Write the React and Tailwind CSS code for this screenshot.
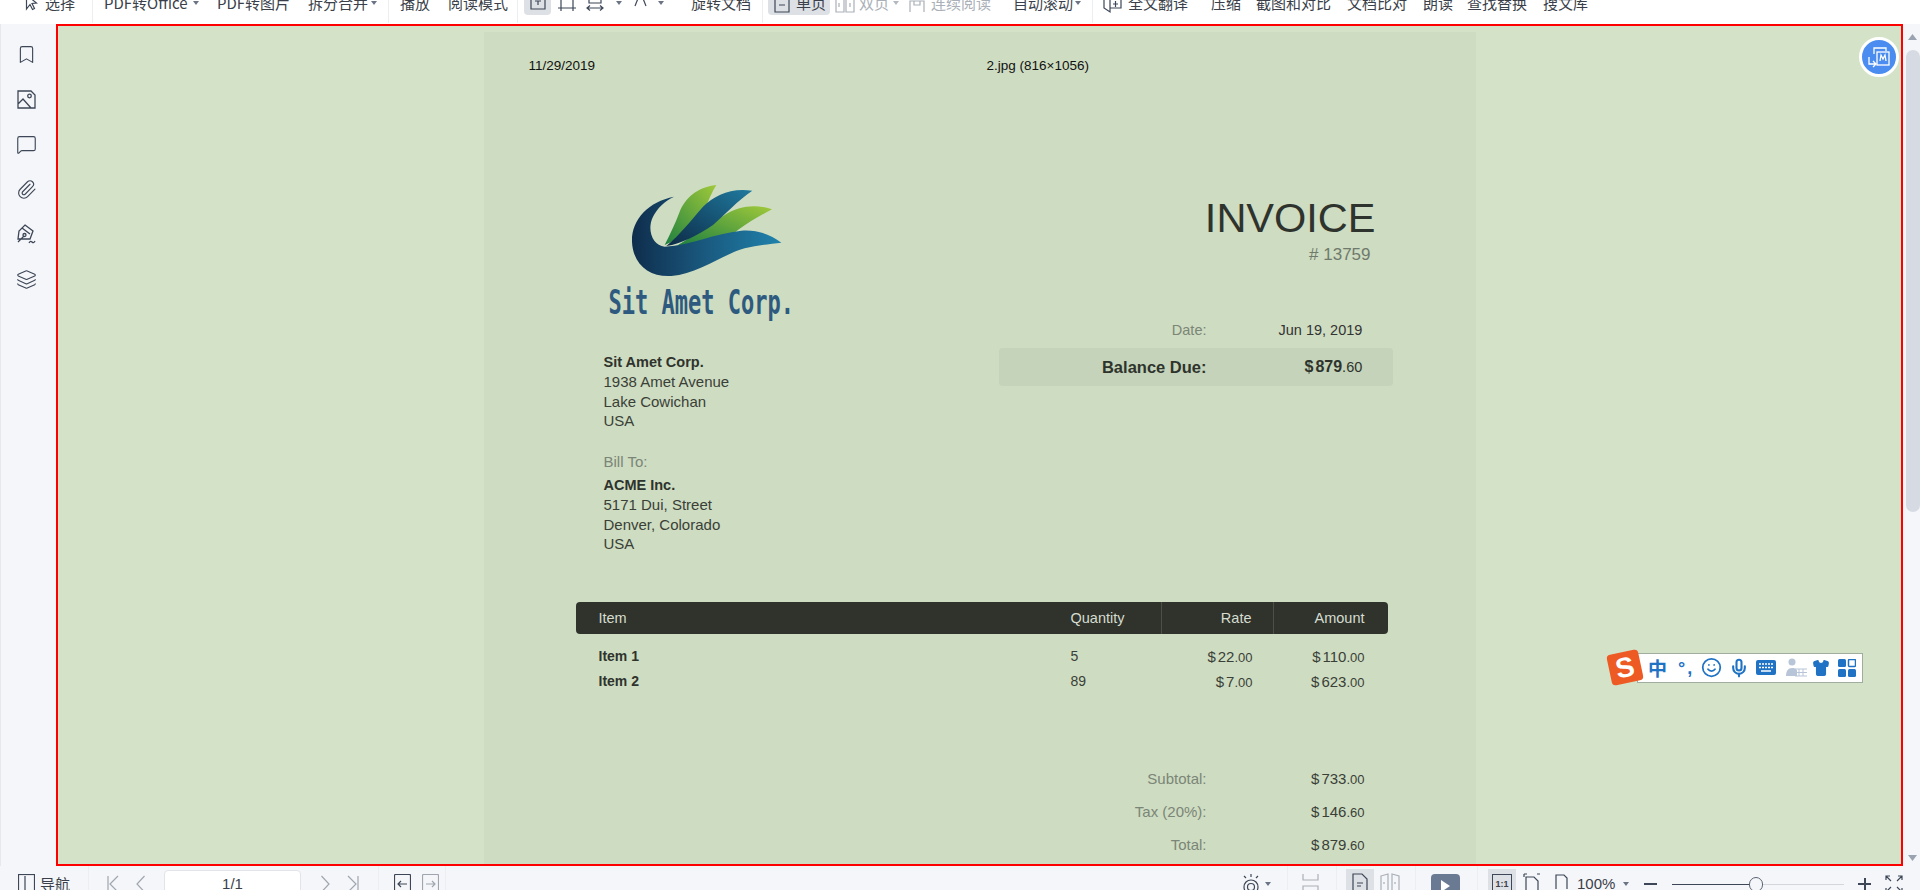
import React from 'react';
import { Bookmark, MessageSquare, Paperclip, Layers, Smile, Mic, Shirt } from 'lucide-react';

const cjk = "font-['Noto_Sans_CJK_SC','Noto_Sans',sans-serif]";

const Caret = ({ className = '' }) => (
  <svg width="6" height="4" viewBox="0 0 6 4" className={`shrink-0 ${className}`}>
    <path d="M0 0h6L3 4z" fill="#6b7485" />
  </svg>
);

const Divider = ({ className = '' }) => <div className={`w-px h-[40px] bg-[#eceef1] shrink-0 ${className}`} />;

const Label = ({ className = '', children }) => (
  <span className={`shrink-0 whitespace-nowrap text-[15px] leading-5 ${className}`}>{children}</span>
);

const Ico = ({ w = 18, h = 18, vb = '0 0 18 18', className = '', children, stroke = '#3d4757' }) => (
  <svg width={w} height={h} viewBox={vb} fill="none" stroke={stroke} strokeWidth="1.2" className={`shrink-0 ${className}`}>
    {children}
  </svg>
);

// toolbar icons: 30px tall, so the y values below are the y on the screen
const BarIco = ({ w = 18, className = '', children, stroke = '#3d4757' }) => (
  <Ico w={w} h={30} vb={`0 -12 ${w} 30`} className={className} stroke={stroke}>{children}</Ico>
);

const TopBar = () => (
  <div className="h-6 bg-white overflow-hidden shrink-0">
    <div className={`flex items-center h-[30px] -mt-3 pl-[25px] text-[#3a3f4a] ${cjk}`}>
      <BarIco w={13}><path d="M1.500 -5l10 8-4.500.5 2.500 5-2 1-2.500-5L1.500 9z" /></BarIco>
      <Label className="ml-[7px] w-[30px]">选择</Label>
      <Divider className="ml-[17px]" />
      <Label className="ml-[11px] w-[86px]">PDF转Office</Label>
      <Caret className="ml-[3px]" />
      <Label className="ml-[18px] w-[72px]">PDF转图片</Label>
      <Label className="ml-[19px] w-[60px]">拆分合并</Label>
      <Caret className="ml-[3px]" />
      <Divider className="ml-[11px]" />
      <Label className="ml-[11px] w-[30px]">播放</Label>
      <Label className="ml-[18px] w-[60px]">阅读模式</Label>
      <Divider className="ml-[9px]" />
      <div className="ml-[6px] w-[27px] h-[24px] bg-[#dde0e5] rounded-sm flex items-center justify-center shrink-0">
        <BarIco w={16}><path d="M1 -5V9H15V-5M5 1H11M8 1V5" /></BarIco>
      </div>
      <BarIco className="ml-[7px]"><path d="M3 -5V8H15V-5M0 8H3M15 8H18M3 8V11M15 8V11" /></BarIco>
      <BarIco className="ml-[10px]"><path d="M3 -5V3H15V-5M1 8H17M4 5.500L1 8L4 10.500M14 5.500L17 8L14 10.500" /></BarIco>
      <Caret className="ml-[12px]" />
      <BarIco w={13} className="ml-[12px]"><path d="M5 -4L1 6M8 -4L12 6" /></BarIco>
      <Caret className="ml-[11px]" />
      <Label className="ml-[27px] w-[60px]">旋转文档</Label>
      <Divider className="ml-[11px]" />
      <div className="ml-[5px] w-[62px] h-[24px] bg-[#dde0e5] rounded-sm flex items-center pl-[6px] shrink-0">
        <BarIco w={16}><path d="M1 -5V12H15V-5M5 5H11" /></BarIco>
        <Label className="ml-[6px]">单页</Label>
      </div>
      <BarIco w={20} stroke="#aab0b8" className="ml-[5px]"><path d="M1 -5V12H9V-5M11 -5V12H19V-5M4 3V7M15 3V7" /></BarIco>
      <Label className="ml-1 w-[30px] text-[#aab0b8]">双页</Label>
      <Caret className="ml-1 opacity-50" />
      <BarIco w={16} stroke="#aab0b8" className="ml-[10px]"><path d="M1 12V1H15V12M5 1V5H11V1" /></BarIco>
      <Label className="ml-[6px] w-[60px] text-[#aab0b8]">连续阅读</Label>
      <Label className="ml-[22px] w-[60px]">自动滚动</Label>
      <Caret className="ml-[2px]" />
      <Divider className="ml-[11px]" />
      <BarIco w={19} className="ml-[10px]"><path d="M1 -5V8L7 12V-2M7 8H18V-5M10 4H15M12.500 1V7" /></BarIco>
      <Label className="ml-[6px] w-[60px]">全文翻译</Label>
      <Label className="ml-[23px] w-[30px]">压缩</Label>
      <Label className="ml-[15px] w-[75px]">截图和对比</Label>
      <Label className="ml-4 w-[60px]">文档比对</Label>
      <Label className="ml-4 w-[30px]">朗读</Label>
      <Label className="ml-[14px] w-[60px]">查找替换</Label>
      <Label className="ml-4 w-[45px]">搜文库</Label>
    </div>
  </div>
);

const SideBar = () => (
  <div className="w-14 shrink-0 bg-[#f5f6f9] border-l border-[#e6e8ec] flex flex-col items-center pt-[20px] gap-[24px] pr-1 text-[#3d4757]">
    <Bookmark size={21} strokeWidth={1.3} />
    <svg width="21" height="21" viewBox="0 0 21 21" fill="none" stroke="currentColor" strokeWidth="1.3">
      <path d="M2 2h13l4 4v13H2zM2 15l5-5 8 9" />
      <circle cx="13.500" cy="7" r="1.800" />
    </svg>
    <MessageSquare size={21} strokeWidth={1.3} />
    <Paperclip size={21} strokeWidth={1.3} />
    <svg width="21" height="21" viewBox="0 0 21 21" fill="none" stroke="currentColor" strokeWidth="1.3">
      <path d="M9 1l8 6-3 8H2l1-8zM2 18l6-6" />
      <path d="M6 4l8 6" />
      <circle cx="8.500" cy="11" r="1.500" />
      <path d="M13 19c1-2 2-2 3-1s2 1 3-1" />
    </svg>
    <Layers size={21} strokeWidth={1.3} />
  </div>
);

const Logo = () => (
  <svg width="157" height="100" viewBox="140 30 471 300" className="block ml-6">
    <defs>
      <linearGradient id="swoosh" x1="0" x2="1" y1="0" y2="0">
        <stop offset="0" stopColor="#0f2d4c" />
        <stop offset="0.5" stopColor="#1a5a80" />
        <stop offset="1" stopColor="#1f82ab" />
      </linearGradient>
      <linearGradient id="blade" x1="0" x2="1" y1="1" y2="0">
        <stop offset="0" stopColor="#0d2a46" />
        <stop offset="1" stopColor="#1f7a9e" />
      </linearGradient>
      <linearGradient id="leaf" x1="0" x2="1" y1="1" y2="0">
        <stop offset="0" stopColor="#1f8040" />
        <stop offset="1" stopColor="#a0c93a" />
      </linearGradient>
    </defs>
    <path d="M405 45C345 52 312 85 295 125C282 160 265 195 250 225C300 205 340 170 370 120C380 95 392 65 405 45Z" fill="url(#leaf)" />
    <path d="M572 118C520 100 470 110 430 135C390 160 340 195 290 225L420 225C450 190 510 150 572 118Z" fill="url(#leaf)" />
    <path d="M513 62C450 52 400 75 365 110C330 150 295 195 255 228C300 222 350 195 395 165C430 135 470 90 513 62Z" fill="url(#blade)" />
    <path d="M278 80C200 95 150 150 152 215C155 285 205 322 270 318C350 312 420 255 490 235C530 225 570 222 600 218C570 195 530 178 480 182C400 190 330 225 250 230C215 228 195 180 215 140C228 115 250 92 278 80Z" fill="url(#swoosh)" />
  </svg>
);

const Money = ({ whole, cents }) => (
  <span className="text-[15px]">
    $<span className="ml-[2px]">{whole}</span>
    <span className="text-[13px]">.{cents}</span>
  </span>
);

const rows = [
  ['Item 1', '5', '22', '110'],
  ['Item 2', '89', '7', '623'],
];

const totals = [
  ['Subtotal:', '733', '00'],
  ['Tax (20%):', '146', '60'],
  ['Total:', '879', '60'],
];

const InvoicePage = () => (
  <div className="w-[992px] mx-auto mt-[6px] bg-[#cedcc1] h-[900px] pt-[26px] font-['Liberation_Sans',Arial,sans-serif] text-[14px] text-[#3a3f38]">
    <div className="flex pl-[45px] text-[13.500px] leading-4 text-[#111]">
      <span className="w-[458px]">11/29/2019</span>
      <span>2.jpg (816×1056)</span>
    </div>

    <div className="flex mt-[106px]">
      <div className="ml-[120px] w-[395px] shrink-0 text-[15px]">
        <Logo />
        <div className="ml-[5px] mt-[6px] h-[34px] font-['DejaVu_Sans_Mono',monospace] font-bold text-[22px] leading-[34px] text-[#2d5a7e] scale-y-150 origin-center whitespace-nowrap">
          Sit Amet Corp.
        </div>
        <div className="mt-[33px] leading-[19.300px]">
          <div className="font-bold text-[14.500px] text-[#2f332d]">Sit Amet Corp.</div>
          <div>1938 Amet Avenue</div>
          <div>Lake Cowichan</div>
          <div>USA</div>
        </div>
        <div className="mt-[22px] leading-[19px] text-[#7b8578]">Bill To:</div>
        <div className="mt-[5px] leading-[19.300px]">
          <div className="font-bold text-[14.500px] text-[#2f332d]">ACME Inc.</div>
          <div>5171 Dui, Street</div>
          <div>Denver, Colorado</div>
          <div>USA</div>
        </div>
      </div>

      <div className="w-[394px] pt-[14px]">
        <div className="pr-[17px] text-right text-[41.500px] leading-[48px] text-[#2f332d]">INVOICE</div>
        <div className="mt-[3px] pr-[22px] text-right text-[17px] leading-5 text-[#6f7a6c]">#&nbsp;13759</div>
        <div className="flex mt-[55px] leading-5 text-[14.500px]">
          <span className="w-[208px] text-right text-[#7b8578]">Date:</span>
          <span className="ml-[72px] text-[#333]">Jun 19, 2019</span>
        </div>
        <div className="flex items-center h-[38px] mt-2 bg-[#c4d3b9] rounded">
          <span className="w-[208px] text-right font-bold text-[16.500px] text-[#2f332d]">Balance Due:</span>
          <span className="ml-[98px] text-[#2f332d] text-[16px] font-bold">
            $<span className="ml-[2px]">879</span>
            <span className="font-normal text-[14.500px]">.60</span>
          </span>
        </div>
      </div>
    </div>

    <div className="ml-[92px] w-[812px] mt-[49px]">
      <div className="flex h-8 leading-8 bg-[#2f332b] rounded text-[#d6dcd0] text-[14.500px]">
        <div className="w-[495px] pl-[23px]">Item</div>
        <div className="w-[91px] border-r border-[#4c5147]">Quantity</div>
        <div className="w-[112px] pr-[21px] text-right border-r border-[#4c5147]">Rate</div>
        <div className="flex-1 pr-[23px] text-right">Amount</div>
      </div>
      <div className="mt-[10px]">
        {rows.map(([name, qty, rate, amount]) => (
          <div key={name} className="flex h-[25px] leading-[25px]">
            <div className="w-[495px] pl-[23px] font-bold text-[#2f332d]">{name}</div>
            <div className="w-[91px]">{qty}</div>
            <div className="w-[112px] pr-[21px] text-right"><Money whole={rate} cents="00" /></div>
            <div className="flex-1 pr-[23px] text-right"><Money whole={amount} cents="00" /></div>
          </div>
        ))}
      </div>
      <div className="mt-[68px]">
        {totals.map(([label, whole, cents]) => (
          <div key={label} className="flex h-[33px] leading-[33px]">
            <div className="w-[631px] text-right text-[15px] text-[#7b8578]">{label}</div>
            <div className="flex-1 pr-[23px] text-right"><Money whole={whole} cents={cents} /></div>
          </div>
        ))}
      </div>
    </div>
  </div>
);

const FloatButton = () => (
  <div className="absolute top-[11px] right-[2px] w-10 h-10 rounded-full bg-[#4a8cf0] border-[3px] border-white flex items-center justify-center">
    <svg width="24" height="22" viewBox="0 0 24 22" fill="none" stroke="white" strokeWidth="1.300">
      <path d="M7 8V2h12v3" />
      <rect x="10" y="6" width="12" height="13" fill="#4a8cf0" />
      <path d="M13 15l1-6 2 4 2-4 1 6" />
      <path d="M2 11v7h6M6 15l3 3-3 3" />
    </svg>
  </div>
);

const Sogou = () => (
  <div className="absolute left-[1551px] top-[626px] flex items-center">
    <div className="relative z-10 w-[32px] h-[31px] -rotate-12 rounded-[4px] bg-[#ee5a24] flex items-center justify-center text-white font-['Liberation_Sans',sans-serif] font-bold text-[28px] leading-none">
      S
    </div>
    <div className="-ml-[4px] w-[226px] h-[30px] bg-white border border-[#9fae9f] flex items-center text-[#1f72c4] pl-[10px]">
      <span className={`w-[19px] font-bold text-[19px] leading-none ${cjk}`}>中</span>
      <span className="ml-[11px] w-[14px] font-bold text-[18px] leading-none tracking-[2px] font-['Liberation_Sans',sans-serif] whitespace-nowrap">°,</span>
      <Smile size={21} strokeWidth={2} className="ml-[9px] shrink-0" />
      <Mic size={20} strokeWidth={2.5} className="ml-[7px] shrink-0" />
      <svg width="20" height="15" viewBox="0 0 20 15" className="ml-[7px] shrink-0">
        <rect width="20" height="15" rx="2" fill="#1f72c4" />
        <path d="M3 4h14M3 7.500h14" stroke="white" strokeWidth="1.500" strokeDasharray="2 1" />
        <path d="M5 11h10" stroke="white" strokeWidth="1.500" />
      </svg>
      <svg width="22" height="20" viewBox="0 0 22 20" className="ml-[9px] shrink-0">
        <circle cx="7" cy="4" r="3.500" fill="#b8c5d8" />
        <path d="M1 18c0-5 2-8 6-8s5 2 5 3v5z" fill="#b8c5d8" />
        <path d="M10 11h12M10 14.500h12M10 18h12M14 11v7M18 11v7" stroke="#b8c5d8" fill="none" />
      </svg>
      <Shirt size={18} strokeWidth={1.500} fill="#1f72c4" className="ml-[5px] shrink-0" />
      <svg width="18" height="18" viewBox="0 0 18 18" className="ml-[8px] shrink-0">
        <rect width="8" height="8" rx="1.500" fill="#1f72c4" />
        <rect x="10.500" y="0.500" width="7" height="7" rx="1" fill="white" stroke="#1f72c4" strokeWidth="1.500" />
        <rect y="10" width="8" height="8" rx="1.500" fill="#1f72c4" />
        <rect x="10" y="10" width="8" height="8" rx="1.500" fill="#1f72c4" />
      </svg>
    </div>
  </div>
);

const ScrollBar = () => (
  <div className="w-[17px] shrink-0 bg-[#f5f6f9] flex flex-col items-center pt-[10px] pb-[5px] pl-[2px]">
    <svg width="9" height="6" viewBox="0 0 9 6"><path d="M4.500 0L9 6H0z" fill="#9aa3b2" /></svg>
    <div className="mt-[10px] w-[14px] h-[462px] rounded-full bg-[#d6dae2]" />
    <svg width="9" height="6" viewBox="0 0 9 6" className="mt-auto"><path d="M0 0h9L4.500 6z" fill="#9aa3b2" /></svg>
  </div>
);

const BottomBar = () => (
  <div className="h-6 bg-[#f5f6f9] overflow-hidden shrink-0">
    <div className={`flex items-center h-9 pl-[18px] text-[#3a3f4a] ${cjk}`}>
      <Ico w={17} h={20} vb="0 0 17 20"><rect x="0.500" y="0.500" width="16" height="19" /><path d="M7 2v16" /></Ico>
      <Label className="ml-[5px] w-[30px]">导航</Label>
      <Divider className="ml-[18px] bg-[#e2e4e9]" />
      <Ico w={12} h={18} vb="0 0 12 18" stroke="#a0a6b0" className="ml-[18px]"><path d="M1 1v16M11 1L3 9l8 8" /></Ico>
      <Ico w={9} h={18} vb="0 0 9 18" stroke="#a0a6b0" className="ml-[17px]"><path d="M8.500 1L1 9l7.500 8" /></Ico>
      <div className="ml-[19px] w-[137px] h-7 bg-white border border-[#e2e4e9] rounded-sm text-center text-[15px] leading-[26px] shrink-0 font-['Liberation_Sans',sans-serif]">1/1</div>
      <Ico w={9} h={18} vb="0 0 9 18" stroke="#a0a6b0" className="ml-5"><path d="M.5 1L8 9l-7.500 8" /></Ico>
      <Ico w={12} h={18} vb="0 0 12 18" stroke="#a0a6b0" className="ml-[17px]"><path d="M11 1v16M1 1l8 8-8 8" /></Ico>
      <Divider className="ml-[19px] bg-[#e2e4e9]" />
      <Ico w={17} h={20} vb="0 0 17 20" className="ml-[15px]"><rect x="0.500" y="0.500" width="16" height="19" rx="1" /><path d="M13 10H4M7 7l-3 3 3 3" /></Ico>
      <Ico w={17} h={20} vb="0 0 17 20" stroke="#a0a6b0" className="ml-[11px]"><rect x="0.500" y="0.500" width="16" height="19" rx="1" /><path d="M4 10h9M10 7l3 3-3 3" /></Ico>
      <Divider className="ml-[6px] bg-[#e2e4e9]" />

      <div className="ml-auto pr-[17px] flex items-center">
        <Ico w={20} h={22} vb="0 0 20 22">
          <path d="M10 1v3M3 3l2 2M17 3l-2 2" />
          <path d="M3 14c0-4 3-7 7-7s7 3 7 7-3 7-7 7-7-3-7-7z" />
          <circle cx="10" cy="14" r="3.500" />
        </Ico>
        <Caret className="ml-1" />
        <Divider className="ml-4 bg-[#e2e4e9]" />
        <Ico w={17} h={20} vb="0 0 17 20" stroke="#aab0b8" className="ml-[14px]"><path d="M1 0v6h15V0M1 20v-8h15v8" /></Ico>
        <Divider className="ml-[17px] bg-[#e2e4e9]" />
        <div className="ml-[9px] w-7 h-[30px] bg-[#dde0e5] flex items-center justify-center shrink-0">
          <Ico w={16} h={22} vb="0 0 16 22"><path d="M1 1h9l5 5v15H1zM5 10h6M5 13h4" /></Ico>
        </div>
        <Ico w={20} h={22} vb="0 0 20 22" stroke="#aab0b8" className="ml-[6px]"><path d="M1 3l7-2v20H1zM12 1l7 2v18h-7zM4 9v2M15 9v2" /></Ico>
        <Divider className="ml-[15px] bg-[#e2e4e9]" />
        <div className="ml-[15px] w-[29px] h-6 mt-1 rounded-sm bg-[#6b7a93] flex items-center justify-center shrink-0">
          <svg width="9" height="12" viewBox="0 0 9 12"><path d="M0 0l9 6-9 6z" fill="white" /></svg>
        </div>
        <Divider className="ml-[17px] bg-[#e2e4e9]" />
        <div className="ml-[10px] w-7 h-[30px] bg-[#dde0e5] flex items-center justify-center shrink-0">
          <div className="w-[20px] h-[20px] border border-[#3d4757] text-[9px] leading-[18px] text-center font-['Liberation_Sans',sans-serif] font-bold">1:1</div>
        </div>
        <Ico w={18} h={22} vb="0 0 18 22" className="ml-[7px]"><path d="M3 4h8l4 4v14H3zM1 1h3M1 1v3M17 1h-3" /></Ico>
        <Ico w={17} h={22} vb="0 0 17 22" className="ml-3"><path d="M3 16V2h8l3 3v11M1 20h15M1 20l2-2M16 20l-2-2" /></Ico>
        <span className="ml-[7px] w-[39px] text-[15px] leading-5 shrink-0 font-['Liberation_Sans',sans-serif]">100%</span>
        <Caret className="ml-[7px]" />
        <div className="ml-[15px] w-[13px] h-[2px] bg-[#3d4757] shrink-0" />
        <div className="ml-[15px] w-[172px] h-px bg-[#d3d6dc] relative shrink-0">
          <div className="w-[77px] h-px bg-[#3d4757]" />
          <div className="absolute left-[77px] -top-[7px] w-[14px] h-[15px] rounded-full bg-[#f5f6f9] border border-[#5a6474]" />
        </div>
        <div className="ml-[14px] w-[13px] h-[13px] relative shrink-0">
          <div className="absolute left-0 top-[5.500px] w-[13px] h-[2px] bg-[#3d4757]" />
          <div className="absolute top-0 left-[5.500px] w-[2px] h-[13px] bg-[#3d4757]" />
        </div>
        <Ico w={18} h={18} vb="0 0 18 18" className="ml-[14px]"><path d="M1 5V1h4M1 1l5 5M13 1h4v4M17 1l-5 5M1 13v4h4M1 17l5-5M17 13v4h-4M17 17l-5-5" /></Ico>
      </div>
    </div>
  </div>
);

const App = () => (
  <div className="w-[1920px] h-[890px] flex flex-col overflow-hidden bg-white">
    <TopBar />
    <div className="flex flex-1 min-h-0">
      <SideBar />
      <div className="relative flex-1 border-2 border-[#ff0000] bg-[#d4e3c8] overflow-hidden">
        <InvoicePage />
        <FloatButton />
        <Sogou />
      </div>
      <ScrollBar />
    </div>
    <BottomBar />
  </div>
);

export default App;
